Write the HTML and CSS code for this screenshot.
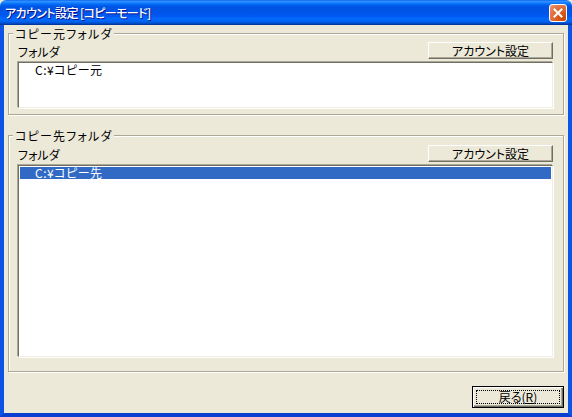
FILE: index.html
```html
<!DOCTYPE html>
<html lang="ja">
<head>
<meta charset="utf-8">
<title>アカウント設定 [コピーモード]</title>
<link rel="stylesheet" href="styles.css">
</head>
<body>
<div class="window">
  <div class="titlebar">
    <span class="title">アカウント設定 [コピーモード]</span>
    <button class="close" aria-label="閉じる">
      <svg width="10" height="10" viewBox="0 0 10 10"><path d="M1.5 1.5L8.5 8.5M8.5 1.5L1.5 8.5" stroke="#fff" stroke-width="2" stroke-linecap="square"/></svg>
    </button>
  </div>
  <div class="client">
    <fieldset class="group group-src">
      <legend>コピー元フォルダ</legend>
      <div class="row">
        <span class="label">フォルダ</span>
        <button class="btn">アカウント設定</button>
      </div>
      <div class="listbox list-src">
        <div class="item">C:¥コピー元</div>
      </div>
    </fieldset>
    <fieldset class="group group-dst">
      <legend>コピー先フォルダ</legend>
      <div class="row row-dst">
        <span class="label">フォルダ</span>
        <button class="btn">アカウント設定</button>
      </div>
      <div class="listbox list-dst">
        <div class="item selected">C:¥コピー先</div>
      </div>
    </fieldset>
    <div class="footer">
      <button class="btn btn-default"><span class="focus">戻る(<u>R</u>)</span></button>
    </div>
  </div>
</div>
</body>
</html>
```

FILE: styles.css
```css
* { box-sizing: border-box; }
html, body {
  margin: 0;
  padding: 0;
  background: #ECE9D8;
}
body {
  font-family: "Noto Sans CJK JP", "Noto Sans", sans-serif;
  font-size: 12px;
  color: #000;
  font-feature-settings: "palt";
}
.window {
  width: 572px;
  height: 417px;
  display: flex;
  flex-direction: column;
}
.titlebar {
  height: 25px;
  flex: none;
  display: flex;
  align-items: center;
  justify-content: space-between;
  padding: 0 5px 0 5px;
  background: linear-gradient(to bottom, #0058ee 0%, #3593ff 4%, #288eff 8%, #127dff 12%, #036ffc 16%, #0262ee 20%, #0057e5 26%, #0054e3 32%, #0055eb 56%, #005bf5 66%, #026afe 76%, #0062ef 86%, #0052d6 92%, #0040ab 96%, #003092 100%);
  border-radius: 6px 6px 0 0;
}
.title {
  color: #fff;
  font-weight: 500;
  font-size: 12px;
  line-height: 14px;
  letter-spacing: -0.6px;
  text-shadow: 1px 1px 0 #0f1089;
  padding-top: 1px;
}
.close {
  width: 18px;
  height: 18px;
  padding: 0;
  margin: 0;
  border: 1px solid #fff;
  border-radius: 3px;
  background: radial-gradient(circle at 85% 85%, #cc4600 0%, #dc6527 45%, #e7805a 80%, #f0a385 100%);
  display: flex;
  align-items: center;
  justify-content: center;
}
.client {
  flex: 1;
  display: flex;
  flex-direction: column;
  padding: 0 4px;
  border-left: 4px solid #0b54e6;
  border-right: 4px solid #0b54e6;
  border-bottom: 4px solid #0a3fd0;
  background: #ECE9D8;
}
.group {
  margin: 0;
  padding: 0 10px 6px 9px;
  border: 1px solid #ACA899;
  box-shadow: 1px 1px 0 #fff, inset 1px 1px 0 #fff;
  min-inline-size: 0;
}
.group-src { margin-top: 1px; }
.group-dst { margin-top: 13px; padding-bottom: 14px; }
legend {
  margin-left: -5px;
  padding: 1px 1px 0 2px;
  line-height: 14px;
  letter-spacing: 1.2px;
  background: #ECE9D8;
}
.row {
  display: flex;
  justify-content: space-between;
  align-items: flex-end;
  margin-top: 1px;
  height: 17px;
}
.row-dst { margin-top: 2px; }
.label {
  line-height: 14px;
}
.btn {
  font-family: inherit;
  font-size: 12px;
  font-feature-settings: "palt";
  color: #000;
  background: #ECE9D8;
  margin: 0;
  padding: 0;
  border-style: solid;
  border-width: 1px;
  border-color: #fff #716F64 #716F64 #fff;
  box-shadow: inset -1px -1px 0 #ACA899;
  width: 125px;
  height: 17px;
  line-height: 13px;
}
.listbox {
  margin-top: 3px;
  background: #fff;
  border-style: solid;
  border-width: 1px;
  border-color: #716F64 #F1EFE2 #F1EFE2 #716F64;
  box-shadow: -1px -1px 0 #ACA899, 1px 1px 0 #fff;
  padding: 1px;
}
.list-src { height: 46px; }
.list-dst { height: 192px; }
.item {
  height: 12px;
  line-height: 12px;
  padding-left: 15px;
  letter-spacing: 0.5px;
}
.selected {
  background: #316AC5;
  color: #fff;
}
.footer {
  display: flex;
  justify-content: flex-end;
  margin-top: 14px;
}
.btn-default {
  width: 92px;
  height: 22px;
  border: 1px solid #000;
  box-shadow: inset 1px 1px 0 #fff, inset -1px -1px 0 #716F64, inset -2px -2px 0 #ACA899;
  padding: 3px;
  display: flex;
}
.focus {
  flex: 1;
  border: 1px dotted #000;
  line-height: 12px;
  display: flex;
  align-items: center;
  justify-content: center;
}
.focus u {
  text-decoration-thickness: 1px;
  text-underline-offset: 1px;
}
```
